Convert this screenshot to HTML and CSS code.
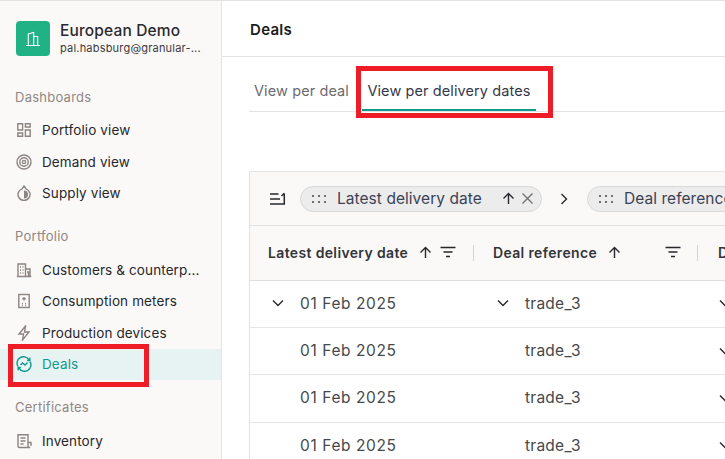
FILE: index.html
```html
<!DOCTYPE html>
<html lang="en">
<head>
<meta charset="utf-8">
<title>Deals</title>
<link rel="stylesheet" href="styles.css">
</head>
<body>
<div class="app">
  <aside class="sidebar">
    <div class="org">
      <div class="logo">
        <svg width="16" height="16" viewBox="0 0 16 16" fill="none" stroke="#fff" stroke-width="1.1"><path d="M1 14.500h14M3.300 14.500V3L8.700 1.500V14.500M8.700 5.500h4V14.500"/></svg>
      </div>
      <div class="org-text">
        <div class="org-name">European Demo</div>
        <div class="org-mail">pal.habsburg@granular-...</div>
      </div>
    </div>

    <div class="nav-title first">Dashboards</div>
    <a class="nav-item"><svg class="ico" viewBox="0 0 16 16"><path d="M1.800 1.800h4.800v6.200H1.800zM9.400 1.800h4.800v3.200H9.400zM9.400 8h4.800v6.200H9.400zM1.800 11h4.800v3.200H1.800z"/></svg>Portfolio view</a>
    <a class="nav-item"><svg class="ico" viewBox="0 0 16 16"><circle cx="8" cy="8" r="7"/><circle cx="8" cy="8" r="4.200"/><circle cx="8" cy="8" r="1.600"/></svg>Demand view</a>
    <a class="nav-item"><svg class="ico" viewBox="0 0 16 16"><path d="M8 1l2 2.800a6 6 0 1 1-4 0z"/><path class="fill" d="M8 5.500a4 4 0 0 1 0 8z"/></svg>Supply view</a>

    <div class="nav-title">Portfolio</div>
    <a class="nav-item"><svg class="ico" viewBox="0 0 16 16"><path d="M.8 14.500h14.500M2 14.500V2h7.500v12.500M9.500 7H14v7.500M4 5h1M6.500 5h1M4 8h1M6.500 8h1M4 11h1M6.500 11h1M11 10h1.500v4.500"/></svg>Customers &amp; counterp...</a>
    <a class="nav-item"><svg class="ico" viewBox="0 0 16 16"><rect x="2.800" y="1.500" width="10.400" height="13"/><path d="M8 4v3.500M6.300 5.700h3.400M6 10.500h.9M9.100 10.500h.9M6 12.500h.9M9.100 12.500h.9"/></svg>Consumption meters</a>
    <a class="nav-item"><svg class="ico" viewBox="0 0 16 16"><path d="M9.500 1L3 9h4.500l-1 6L13 7H8.500z"/></svg>Production devices</a>
    <a class="nav-item active"><svg class="ico" viewBox="0 0 16 16"><path d="M2 10.500A6.300 6.300 0 0 1 13 3.800M14 5.500A6.300 6.300 0 0 1 3 12.200"/><path d="M13.800 1.800v2.700h-2.600M2.200 14.200v-2.700h2.600M4.500 9l2-2 2.500 2 2.500-2.500"/></svg>Deals</a>

    <div class="nav-title cert">Certificates</div>
    <a class="nav-item"><svg class="ico" viewBox="0 0 16 16"><path d="M12 13V1.800H2V13a1.500 1.500 0 0 0 1.500 1.500H14a1.500 1.500 0 0 1-2-1.500V9.500h3V13"/><path d="M4.500 5h5M4.500 8h5M4.500 11h3"/></svg>Inventory</a>
  </aside>

  <main class="main">
    <header class="topbar"><h1>Deals</h1></header>
    <div class="content">
      <nav class="tabs">
        <a class="tab">View per deal</a>
        <a class="tab current">View per delivery dates</a>
      </nav>

      <section class="card">
        <div class="groupbar">
          <svg class="sort-ico" width="17" height="14" viewBox="0 0 17 14"><path d="M1 2h8.500M1 7h10M1 12h15M15.300 12V1.500M12.500 4l2.800-2.800"/></svg>
          <div class="chip">
            <span class="dots"><i></i><i></i><i></i><i></i><i></i><i></i></span>
            <span class="chip-label">Latest delivery date</span>
            <svg class="arrow" width="13" height="13" viewBox="0 0 13 13"><path d="M6.500 12V1.500M1.500 6.500l5-5 5 5"/></svg>
            <svg class="close" width="13" height="13" viewBox="0 0 13 13"><path d="M1.500 1.500l10 10M11.500 1.500l-10 10"/></svg>
          </div>
          <svg class="next" width="8" height="12" viewBox="0 0 8 12"><path d="M1.500 1l5 5-5 5"/></svg>
          <div class="chip chip-cut">
            <span class="dots"><i></i><i></i><i></i><i></i><i></i><i></i></span>
            <span class="chip-label">Deal reference</span>
          </div>
        </div>

        <div class="row head">
          <div class="cell c1">
            <span class="hlabel">Latest delivery date</span>
            <svg class="arrow" width="13" height="13" viewBox="0 0 13 13"><path d="M6.500 12V1.500M1.500 6.500l5-5 5 5"/></svg>
            <svg class="filter" width="16" height="12" viewBox="0 0 16 12"><path d="M.5 1.500h15M3.500 6h9M6 10.500h4"/></svg>
          </div>
          <div class="cell c2">
            <span class="hlabel">Deal reference</span>
            <svg class="arrow" width="13" height="13" viewBox="0 0 13 13"><path d="M6.500 12V1.500M1.500 6.500l5-5 5 5"/></svg>
            <svg class="filter push" width="16" height="12" viewBox="0 0 16 12"><path d="M.5 1.500h15M3.500 6h9M6 10.500h4"/></svg>
          </div>
          <div class="cell c3"><span class="hlabel">D</span></div>
        </div>

        <div class="row">
          <div class="cell c1"><svg class="chev" width="12" height="8" viewBox="0 0 12 8"><path d="M1 1.500l5 5 5-5"/></svg><span class="val">01 Feb 2025</span></div>
          <div class="cell c2"><svg class="chev" width="12" height="8" viewBox="0 0 12 8"><path d="M1 1.500l5 5 5-5"/></svg><span class="val">trade_3</span></div>
          <div class="cell c3"><svg class="chev" width="12" height="8" viewBox="0 0 12 8"><path d="M1 1.500l5 5 5-5"/></svg></div>
        </div>
        <div class="row">
          <div class="cell c1 indent"><span class="val">01 Feb 2025</span></div>
          <div class="cell c2 indent"><span class="val">trade_3</span></div>
          <div class="cell c3"><svg class="chev" width="12" height="8" viewBox="0 0 12 8"><path d="M1 1.500l5 5 5-5"/></svg></div>
        </div>
        <div class="row">
          <div class="cell c1 indent"><span class="val">01 Feb 2025</span></div>
          <div class="cell c2 indent"><span class="val">trade_3</span></div>
          <div class="cell c3"><svg class="chev" width="12" height="8" viewBox="0 0 12 8"><path d="M1 1.500l5 5 5-5"/></svg></div>
        </div>
        <div class="row">
          <div class="cell c1 indent"><span class="val">01 Feb 2025</span></div>
          <div class="cell c2 indent"><span class="val">trade_3</span></div>
          <div class="cell c3"><svg class="chev" width="12" height="8" viewBox="0 0 12 8"><path d="M1 1.500l5 5 5-5"/></svg></div>
        </div>
      </section>
    </div>
  </main>
</div>
<div class="mark mark-deals"></div>
<div class="mark mark-tab"></div>
</body>
</html>
```

FILE: styles.css
```css
* { box-sizing: border-box; }
html, body { margin: 0; height: 100%; overflow: hidden; background: #fff; }
body { font-family: Inter, "Liberation Sans", sans-serif; color: #26282c; position: relative; }

.app { display: flex; height: 459px; border-top: 1px solid #e3e3e3; overflow: hidden; }

.sidebar { width: 222px; flex: none; background: #fbf9f8; border-right: 1px solid #e6e5e4; padding: 20px 0 0; }
.org { display: flex; align-items: center; gap: 10px; padding: 0 16px; height: 35px; }
.logo { width: 34px; height: 35px; border-radius: 4px; background: #20b184; display: flex; align-items: center; justify-content: center; flex: none; }
.org-name { font-size: 15.5px; font-weight: 500; line-height: 18px; color: #2a2a2e; letter-spacing: .15px; }
.org-mail { font-size: 11px; line-height: 14px; color: #3a3a3e; margin-top: 1px; letter-spacing: .2px; }

.nav-title { font-size: 13px; line-height: 16px; color: #8f8783; padding: 0 15px; margin: 18.800px 0 9.700px; letter-spacing: .25px; }
.nav-title.first { margin-top: 33px; margin-bottom: 9.500px; }
.nav-title.cert { margin-bottom: 10.400px; }
.nav-item { display: flex; align-items: center; gap: 10px; height: 31.600px; padding: 0 16px; font-size: 13.500px; color: #26282c; white-space: nowrap; letter-spacing: .12px; }
.nav-item.active { background: #e6f3f2; color: #0e9a8c; }
.ico { width: 16px; height: 16px; flex: none; fill: none; stroke: #8d8581; stroke-width: 1.400; }
.ico .fill { fill: #8d8581; stroke: none; }
.active .ico { stroke: #0d9a8c; }

.main { flex: 1; min-width: 0; }
.topbar { height: 56px; border-bottom: 1px solid #e3e3e3; padding: 1px 28px 0; display: flex; align-items: center; }
.topbar h1 { margin: 0; font-size: 15px; font-weight: 600; color: #1c1c1c; letter-spacing: .3px; }

.content { padding: 0 0 0 27px; }
.tabs { display: flex; height: 55px; border-bottom: 1px solid #e3e3e3; padding: 0 0 0 5px; gap: 13px; align-items: flex-end; }
.tab { font-size: 14.500px; line-height: 17px; padding-bottom: 12px; color: #6b6b70; white-space: nowrap; letter-spacing: .1px; }
.tab.current { color: #34384a; border-bottom: 2px solid #0e9a8c; padding: 0 0 10px; width: 174px; text-align: center; }

.card { margin-top: 59px; width: 600px; border: 1px solid #e3e3e3; border-right: 0; border-bottom: 0; }
.groupbar { height: 54px; background: #fbf9f8; border-bottom: 1px solid #e3e3e3; display: flex; align-items: center; padding-left: 19px; white-space: nowrap; }
.sort-ico { fill: none; stroke: #26282c; stroke-width: 1.500; flex: none; }
.chip { display: flex; align-items: center; height: 26px; border: 1px solid #d9d9d9; border-radius: 13px; background: #ececec; padding-left: 11px; margin-left: 14px; flex: none; width: 242px; }
.chip-cut { margin-left: 19px; width: 200px; }
.dots { width: 14px; display: grid; grid-template-columns: repeat(3, 2px); column-gap: 4px; row-gap: 4px; margin-right: 11px; }
.dots i { width: 2px; height: 2px; background: #6f6f6f; display: block; }
.chip-label { font-size: 15.500px; color: #3b4256; letter-spacing: .05px; }
.chip .arrow { margin-left: 20px; }
.chip .close { margin-left: 6px; stroke: #6f6f6f; fill: none; stroke-width: 1.300; }
.arrow { fill: none; stroke: #26282c; stroke-width: 1.400; flex: none; }
.next { margin-left: 18px; fill: none; stroke: #26282c; stroke-width: 1.400; flex: none; }

.row { display: flex; height: 47.400px; border-bottom: 1px solid #e6e6e6; }
.row.head { height: 54.500px; background: #fbf9f8; border-bottom: 1px solid #dedede; }
.cell { display: flex; align-items: center; flex: none; padding-bottom: 1px; }
.c1 { width: 224px; padding-left: 22px; }
.c2 { width: 224px; padding-left: 23px; }
.c3 { padding-left: 21px; }
.head .cell { position: relative; }
.head .cell::after { content: ""; position: absolute; right: 0; top: 19px; height: 16px; width: 1px; background: #d5d5d5; }
.head .c3::after { display: none; }
.head .c1 { padding-left: 18px; }
.head .c2 { padding-left: 19px; padding-right: 17px; }
.head .c3 { padding-left: 20px; }
.hlabel { font-size: 14px; font-weight: 600; color: #33353a; white-space: nowrap; letter-spacing: .35px; }
.head .arrow { margin-left: 11px; }
.filter { margin-left: 8px; fill: none; stroke: #26282c; stroke-width: 1.400; flex: none; }
.filter.push { margin-left: auto; }
.chev { fill: none; stroke: #26282c; stroke-width: 1.400; flex: none; margin: 0 16px 0 0; }
.val { font-size: 15.500px; color: #47484c; white-space: nowrap; letter-spacing: .6px; }
.c2 .val { letter-spacing: .25px; }
.indent.c1 { padding-left: 50px; }
.indent.c2 { padding-left: 51px; }

.mark { position: absolute; border: 5px solid #ee1c25; pointer-events: none; }
.mark-deals { left: 8px; top: 344px; width: 141px; height: 43px; }
.mark-tab { left: 356px; top: 66px; width: 197px; height: 52px; }
```
